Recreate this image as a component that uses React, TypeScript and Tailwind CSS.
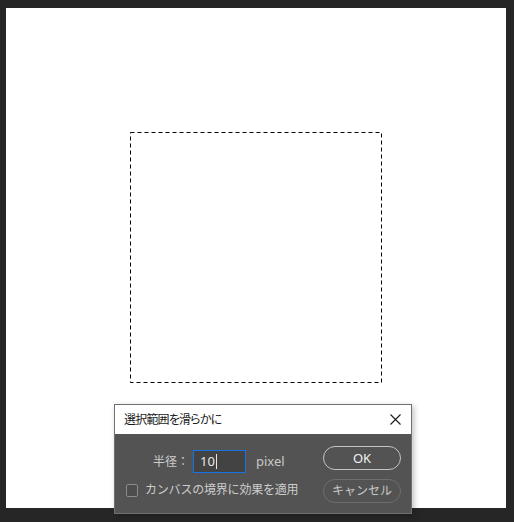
import React from 'react';

const FONT = "'Noto Sans', 'Noto Sans CJK JP', sans-serif";

// ダイアログ上部のタイトルバー
const TitleBar: React.FC = () => (
  <div className="h-[29px] bg-white flex items-center justify-between pl-[9px] pr-[10px]">
    <span className="text-[12px] leading-none text-[#1a1a1a] tracking-[-0.8px] [font-feature-settings:'palt']">選択範囲を滑らかに</span>
    <svg width="11" height="11" viewBox="0 0 11 11">
      <path d="M0.5 0.5 L10.5 10.5 M10.5 0.5 L0.5 10.5" stroke="#1a1a1a" strokeWidth="1.1" fill="none" />
    </svg>
  </div>
);

const App: React.FC = () => {
  return (
    <div className="relative w-[514px] h-[522px] bg-[#262626] overflow-hidden" style={{ fontFamily: FONT }}>
      <div className="pl-[6px] pt-[8px]">
        <div className="relative w-[500px] h-[500px] bg-white">
          {/* 選択範囲 (点線) */}
          <svg className="absolute left-[124px] top-[124px]" width="253" height="252">
            <rect x="0.5" y="0.5" width="251" height="250" fill="none" stroke="#000" strokeDasharray="4 3" />
          </svg>
        </div>
      </div>

      <div className="absolute left-[114px] top-[404px] w-[298px] h-[110px] border border-[#707070] bg-[#535353] shadow-[2px_2px_6px_rgba(0,0,0,0.25)]">
        <TitleBar />
        <div className="flex h-[79px]">
          <div className="flex-1 pl-[11px] pt-[16px] flex flex-col">
            <div className="flex items-center h-[23px] ml-[27px]">
              <span className="text-[12px] text-[#cdcdcd] w-[36px]">半径：</span>
              <div className="ml-[4px] w-[53px] h-[23px] border border-[#1473e6] bg-[#434343] flex items-center pl-[6px]">
                <span className="text-[13px] text-[#e6e6e6] leading-none">10</span>
                <span className="w-px h-[15px] bg-[#e6e6e6] ml-px" />
              </div>
              <span className="ml-[10px] text-[13px] text-[#c8c8c8] leading-none">pixel</span>
            </div>
            <div className="flex items-center mt-[8px] h-[18px]">
              <span className="w-[12px] h-[13px] rounded-[2px] border border-[#8c8c8c] bg-[#4d4d4d]" />
              <span className="ml-[7px] text-[12px] text-[#cdcdcd] leading-none tracking-[-0.2px]">カンバスの境界に効果を適用</span>
            </div>
          </div>
          <div className="pr-[10px] pt-[12px] flex flex-col gap-[9px]">
            <button className="w-[78px] h-[24px] rounded-full border-[1.5px] border-[#c4c4c4] text-[13px] text-[#f0f0f0] leading-none flex items-center justify-center">
              OK
            </button>
            <button className="w-[78px] h-[24px] rounded-full border-[1.5px] border-[#6e6e6e] text-[12px] text-[#c8c8c8] leading-none flex items-center justify-center">
              キャンセル
            </button>
          </div>
        </div>
      </div>
    </div>
  );
};

export default App;
